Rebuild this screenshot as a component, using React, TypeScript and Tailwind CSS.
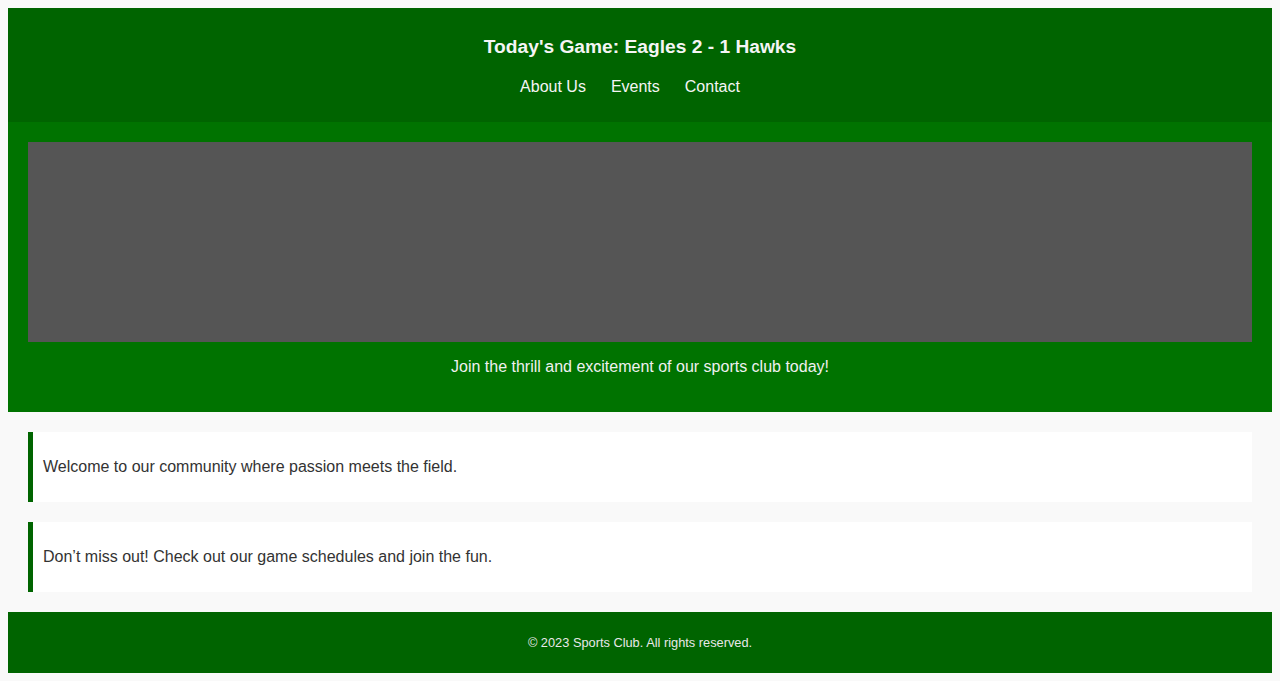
export default function App() {
  return (
    <div className="min-h-[681px] bg-[#f9f9f9] p-[8px] font-['Liberation_Sans',Arial,sans-serif]">
      <header className="bg-[#006400] pt-[28px] pb-[26px] text-center text-[#f5f5f5]">
        <h1 className="text-[19.2px] font-bold leading-[22px]">Today's Game: Eagles 2 - 1 Hawks</h1>
        <nav className="mt-[20px] flex justify-center gap-[25px] pr-[20px] text-[16px] leading-[18px]">
          <a href="#">About Us</a>
          <a href="#">Events</a>
          <a href="#">Contact</a>
        </nav>
      </header>
      <section className="bg-[#007300] px-[20px] pt-[20px] pb-[36px] text-center text-[#f0f0f0]">
        <div className="h-[200px] bg-[#555555]" />
        <p className="mt-[16px] text-[16px] leading-[18px]">Join the thrill and excitement of our sports club today!</p>
      </section>
      <main className="flex flex-col gap-[20px] p-[20px]">
        <div className="border-l-[5px] border-[#006400] bg-white px-[10px] py-[26px] text-[16px] leading-[18px] text-[#333333]">
          Welcome to our community where passion meets the field.
        </div>
        <div className="border-l-[5px] border-[#006400] bg-white px-[10px] py-[26px] text-[16px] leading-[18px] text-[#333333]">
          Don’t miss out! Check out our game schedules and join the fun.
        </div>
      </main>
      <footer className="flex h-[61px] items-center justify-center bg-[#006400] text-[12.8px] text-[#e8e8e8]">
        © 2023 Sports Club. All rights reserved.
      </footer>
    </div>
  );
}
